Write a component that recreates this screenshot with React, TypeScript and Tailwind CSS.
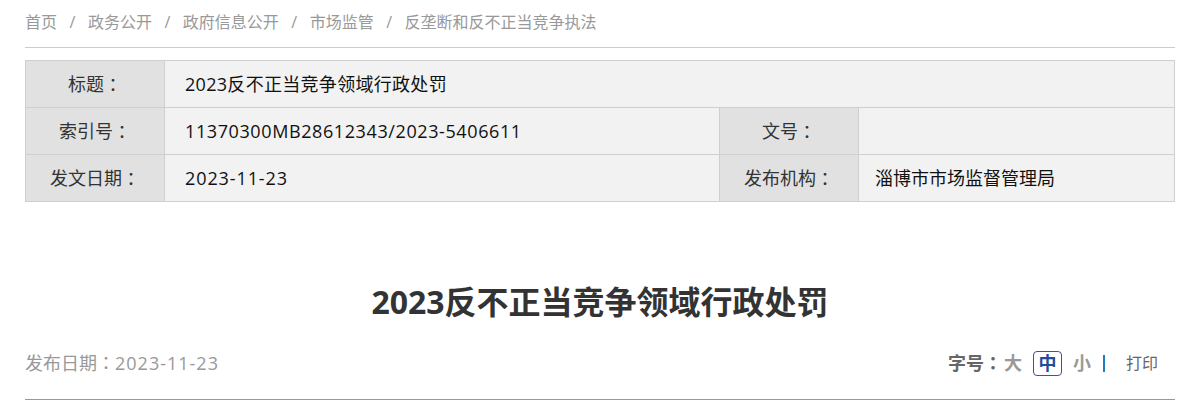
import React from 'react';

const crumbs = ['首页', '政务公开', '政府信息公开', '市场监管', '反垄断和反不正当竞争执法'];

// centered full-width colon, as in the original page
function Colon() {
  return <span style={{ fontFamily: '"Noto Sans CJK TC", sans-serif' }}>：</span>;
}

export default function App() {
  const font = { fontFamily: '"Open Sans", "Noto Sans CJK SC", sans-serif' };
  const label = 'h-[47px] flex items-center justify-center bg-[#e1e1e1] text-[#333333] border-r border-b border-[#cfcfcf]';
  const value = 'h-[47px] flex items-center pl-[20px] bg-[#f2f2f2] text-[#111111] border-r border-b border-[#cfcfcf]';
  return (
    <div className="min-h-screen bg-white" style={font}>
      <div className="ml-[25px] w-[1150px]">
        {/* Breadcrumb */}
        <div className="h-[48px] border-b border-[#cccccc] pt-[12px] text-[16px] leading-[20px] text-[#999999] flex">
          {crumbs.map((c, i) => (
            <span key={c} className="flex">
              {i > 0 && <span className="mx-[12.5px]">/</span>}
              <span>{c}</span>
            </span>
          ))}
        </div>

        {/* Info table */}
        <div className="mt-[12px] grid grid-cols-[139px_555px_139px_316px] border-t border-l border-[#cfcfcf] text-[18px]">
          <div className={label}>标题<Colon /></div>
          <div className={value + ' col-span-3 tracking-[0.3px]'}>2023反不正当竞争领域行政处罚</div>

          <div className={label}>索引号<Colon /></div>
          <div className={value + ' tracking-[0.6px]'}>11370300MB28612343/2023-5406611</div>
          <div className={label}>文号<Colon /></div>
          <div className={value}></div>

          <div className={label}>发文日期<Colon /></div>
          <div className={value + ' tracking-[0.9px]'}>2023-11-23</div>
          <div className={label}>发布机构<Colon /></div>
          <div className={value.replace('pl-[20px]', 'pl-[16px]')}>淄博市市场监督管理局</div>
        </div>

        {/* Article title */}
        <h1 className="mt-[75px] text-center text-[32px] leading-[50px] font-bold text-[#333333]">
          2023反不正当竞争领域行政处罚
        </h1>

        {/* Meta row */}
        <div className="mt-[16px] h-[40px] flex items-center justify-between">
          <div className="text-[18px] text-[#999999]">
            发布日期<Colon /><span className="tracking-[1px]">2023-11-23</span>
          </div>
          <div className="flex items-center text-[18px] pr-[17px]">
            <span className="font-bold text-[#666666]">字号<Colon /></span>
            <span className="font-bold text-[#999999] ml-[2px]">大</span>
            <span className="ml-[11px] w-[29px] h-[25px] flex items-center justify-center border border-[#2b5aa0] rounded-[4px] font-bold text-[#1f4e9c]">中</span>
            <span className="font-bold text-[#999999] ml-[11px]">小</span>
            <span className="ml-[12px] w-[2px] h-[17px] bg-[#1a7fc0]"></span>
            <span className="ml-[21px] text-[16px] text-[#666666]">打印</span>
          </div>
        </div>
        <div className="mt-[16px] h-px bg-[#999999]"></div>
      </div>
    </div>
  );
}
